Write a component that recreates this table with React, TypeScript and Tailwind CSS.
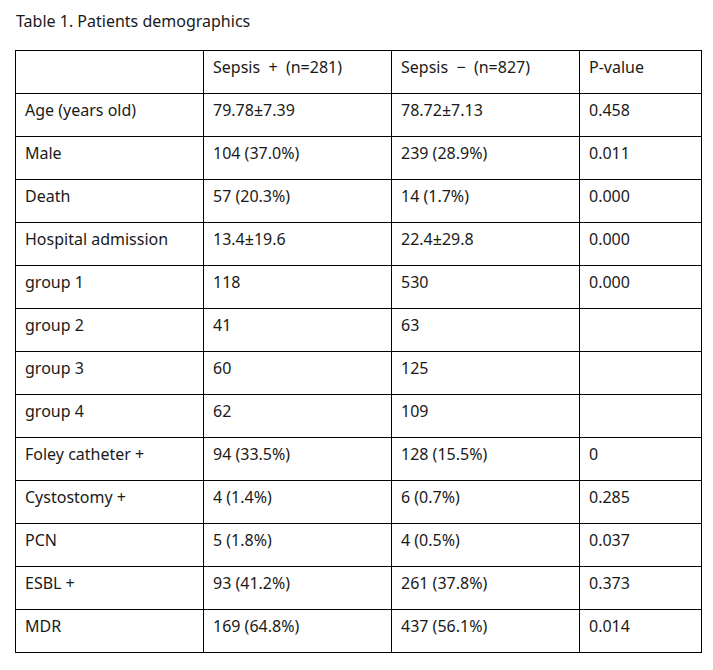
import React from 'react';

const rows: [string, string, string, string][] = [
  ['Age (years old)', '79.78±7.39', '78.72±7.13', '0.458'],
  ['Male', '104 (37.0%)', '239 (28.9%)', '0.011'],
  ['Death', '57 (20.3%)', '14 (1.7%)', '0.000'],
  ['Hospital admission', '13.4±19.6', '22.4±29.8', '0.000'],
  ['group 1', '118', '530', '0.000'],
  ['group 2', '41', '63', ''],
  ['group 3', '60', '125', ''],
  ['group 4', '62', '109', ''],
  ['Foley catheter +', '94 (33.5%)', '128 (15.5%)', '0'],
  ['Cystostomy +', '4 (1.4%)', '6 (0.7%)', '0.285'],
  ['PCN', '5 (1.8%)', '4 (0.5%)', '0.037'],
  ['ESBL +', '93 (41.2%)', '261 (37.8%)', '0.373'],
  ['MDR', '169 (64.8%)', '437 (56.1%)', '0.014'],
];

const cell = 'border border-black h-[43px] pl-[9px] pt-[5px] align-top leading-[22px]';

export default function App() {
  return (
    <div className="min-h-screen bg-white text-[#1a1a1a] font-['Noto_Sans','Noto_Sans_CJK_KR',sans-serif] text-[16px]">
      <div className="pl-4 pt-[10px] text-[16px] leading-[22px]">Table 1. Patients demographics</div>
      <table className="ml-[15px] mt-[18px] border-collapse table-fixed w-[686px]">
        <colgroup>
          <col className="w-[188px]" />
          <col className="w-[188px]" />
          <col className="w-[188px]" />
          <col className="w-[122px]" />
        </colgroup>
        <tbody>
          <tr>
            <td className={cell}></td>
            <td className={cell}>Sepsis&nbsp; +&nbsp; (n=281)</td>
            <td className={cell}>Sepsis&nbsp; −&nbsp; (n=827)</td>
            <td className={cell}>P-value</td>
          </tr>
          {rows.map((r) => (
            <tr key={r[0]}>
              {r.map((c, i) => (
                <td key={i} className={cell}>{c}</td>
              ))}
            </tr>
          ))}
        </tbody>
      </table>
    </div>
  );
}
